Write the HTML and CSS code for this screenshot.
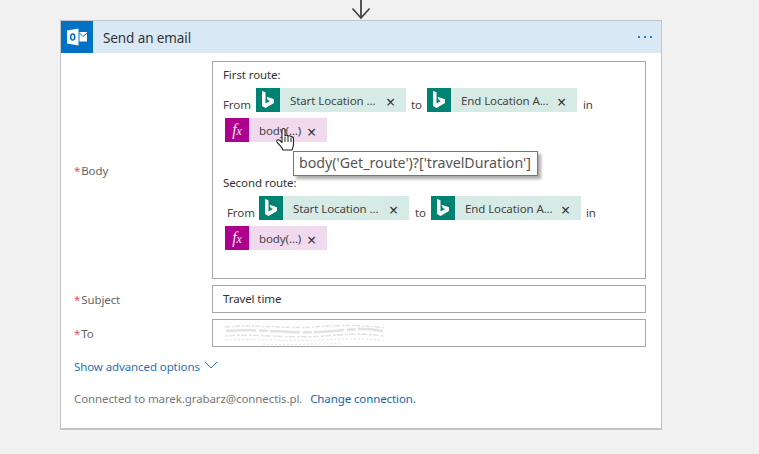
FILE: index.html
```html
<!DOCTYPE html>
<html lang="en">
<head>
<meta charset="utf-8">
<title>Send an email</title>
<link rel="stylesheet" href="styles.css">
</head>
<body>
<div class="arrow">
	<svg width="20" height="21" viewBox="0 0 20 21"><path d="M10 0V19M1.500 9.500L10 19L18.500 9.500" fill="none" stroke="#444" stroke-width="1.800"/></svg>
</div>
<div class="card">
	<div class="card-head">
		<div class="head-icon">
			<svg width="22" height="22" viewBox="0 0 22 22">
				<path d="M1 4.500L12.500 2.500V19.500L1 17.500Z" fill="#fff"/>
				<path d="M13.500 6H21V15.500H13.500Z" fill="#fff"/>
				<path d="M13.500 7L17 10.500L21 7" fill="none" stroke="#0072c6" stroke-width="1"/>
				<ellipse cx="6.700" cy="11" rx="2" ry="3" fill="none" stroke="#0072c6" stroke-width="1.500"/>
			</svg>
		</div>
		<div class="head-title">Send an email</div>
		<div class="head-dots"><i></i><i></i><i></i></div>
	</div>
	<div class="card-body">
		<div class="row">
			<div class="label label-body"><span class="req">*</span>Body</div>
			<div class="field editor">
				<div class="line">First route:</div>
				<div class="tokens">
					<span class="word word-from">From</span>
					<span class="chip chip-bing"><span class="chip-icon"><svg width="14" height="18" viewBox="0 0 14 18"><path d="M1 0L4.500 1.300V12.500L9 10L6.800 9L5.500 5.800L13 8.300V12L4.500 17L1 15Z" fill="#fff"/></svg></span><span class="chip-text">Start Location ...</span><span class="chip-x">×</span></span>
					<span class="word word-to">to</span>
					<span class="chip chip-bing"><span class="chip-icon"><svg width="14" height="18" viewBox="0 0 14 18"><path d="M1 0L4.500 1.300V12.500L9 10L6.800 9L5.500 5.800L13 8.300V12L4.500 17L1 15Z" fill="#fff"/></svg></span><span class="chip-text">End Location A...</span><span class="chip-x">×</span></span>
					<span class="word word-in">in</span>
				</div>
				<div class="fx-row">
					<span class="chip chip-fx"><span class="chip-icon"><span class="fx">f<small>x</small></span></span><span class="chip-text">body(...)</span><span class="chip-x">×</span></span>
				</div>
				<div class="line line-second">Second route:</div>
				<div class="tokens tokens-second">
					<span class="word word-from">From</span>
					<span class="chip chip-bing"><span class="chip-icon"><svg width="14" height="18" viewBox="0 0 14 18"><path d="M1 0L4.500 1.300V12.500L9 10L6.800 9L5.500 5.800L13 8.300V12L4.500 17L1 15Z" fill="#fff"/></svg></span><span class="chip-text">Start Location ...</span><span class="chip-x">×</span></span>
					<span class="word word-to">to</span>
					<span class="chip chip-bing"><span class="chip-icon"><svg width="14" height="18" viewBox="0 0 14 18"><path d="M1 0L4.500 1.300V12.500L9 10L6.800 9L5.500 5.800L13 8.300V12L4.500 17L1 15Z" fill="#fff"/></svg></span><span class="chip-text">End Location A...</span><span class="chip-x">×</span></span>
					<span class="word word-in">in</span>
				</div>
				<div class="fx-row">
					<span class="chip chip-fx"><span class="chip-icon"><span class="fx">f<small>x</small></span></span><span class="chip-text">body(...)</span><span class="chip-x">×</span></span>
				</div>
			</div>
		</div>
		<div class="row">
			<div class="label"><span class="req">*</span>Subject</div>
			<div class="field input">Travel time</div>
		</div>
		<div class="row">
			<div class="label"><span class="req">*</span>To</div>
			<div class="field input">
				<svg class="smudge" width="164" height="26" viewBox="0 0 164 26">
					<g fill="none" stroke="#e2e2e2">
						<path d="M2 6C30 3 60 8 90 6S140 4 162 7" stroke-width="1.500" stroke-dasharray="5 2 2 1"/>
						<path d="M3 10C40 7 70 14 110 10S150 9 160 10" stroke-width="2.500" stroke-dasharray="30 3 9 2"/>
						<path d="M2 15C30 12 60 18 100 15S140 13 162 15" stroke-width="1.500" stroke-dasharray="3 1 6 2"/>
						<path d="M3 19C30 17 60 21 100 19S140 18 160 19" stroke-width="1" stroke-dasharray="2 2"/>
						<path d="M40 23C70 25 90 22 120 23" stroke-width="1" stroke-dasharray="2 2"/>
					</g>
				</svg>
			</div>
		</div>
		<div class="advanced">Show advanced options
			<svg width="14" height="8" viewBox="0 0 14 8"><path d="M1 1L7 7L13 1" fill="none" stroke="#2b72b8" stroke-width="1"/></svg>
		</div>
		<div class="connected">Connected to marek.grabarz@connectis.pl. <a class="change">Change connection.</a></div>
	</div>
</div>
<div class="tooltip">body('Get_route')?['travelDuration']</div>
<svg class="hand" width="20" height="26" viewBox="0 0 20 26">
	<path d="M7 13V3C7 1 10 1 10 3V9C10 8 13 8 13 9.500C13 8.500 16 8.500 16 10C16 9.500 18.500 9.500 18.500 11.500V17C18.500 20 17.500 21 17 23H8C7 20 4 18 2 15C1 13 3 12 5 13.500L7 15.500Z" fill="#fff" stroke="#222" stroke-width="1.100" stroke-linejoin="round"/>
	<path d="M10 10V15M13 10V15M16 11V15" stroke="#222" stroke-width="1"/>
</svg>
</body>
</html>
```

FILE: styles.css
```css
* {
	box-sizing: border-box;
	margin: 0;
	padding: 0;
}
html, body {
	height: 100%;
}
body {
	background: #f1f1f1;
	font-family: "Noto Sans", "Liberation Sans", sans-serif;
	font-size: 11.500px;
	letter-spacing: -0.100px;
	color: #444;
	overflow: hidden;
	padding-left: 60px;
}
.arrow {
	height: 20px;
	width: 602px;
	display: flex;
	justify-content: center;
}
.arrow svg {
	margin-left: -1px;
	margin-top: -1px;
}
.card {
	width: 602px;
	height: 410px;
	background: #fff;
	border: 1px solid #c4c4c4;
	border-bottom-width: 2px;
}
.card-head {
	height: 32px;
	background: #d8e9f5;
	display: flex;
	align-items: center;
}
.head-icon {
	width: 32px;
	height: 32px;
	background: #0072c6;
	display: flex;
	align-items: center;
	justify-content: center;
}
.head-title {
	flex: 1;
	margin-left: 10px;
	padding-top: 1px;
	font-size: 13.500px;
	color: #333;
}
.head-dots {
	display: flex;
	gap: 4px;
	margin-right: 9px;
}
.head-dots i {
	width: 2px;
	height: 2px;
	background: #2b7cd3;
}
.card-body {
	padding: 8px 15px 0 13px;
}
.row {
	display: flex;
	margin-bottom: 6px;
}
.label {
	width: 138px;
	display: flex;
	align-items: center;
	color: #666;
}
.req {
	color: #e0505c;
	margin-right: 1px;
}
.field {
	width: 434px;
	border: 1px solid #a6a6a6;
	background: #fff;
}
.editor {
	height: 218px;
	padding: 3px 12px 0 10px;
}
.input {
	height: 28px;
	line-height: 26px;
	padding-left: 10px;
	color: #333;
	position: relative;
}
.smudge {
	position: absolute;
	left: 10px;
	top: 1px;
}
.line {
	height: 20px;
	line-height: 20px;
	color: #333;
}
.line-second {
	margin-top: 31px;
}
.tokens {
	display: flex;
	align-items: flex-end;
	margin-top: 3px;
	height: 24px;
}
.tokens-second {
	padding-left: 4px;
}
.word {
	color: #444;
	line-height: 14px;
}
.word-from {
	width: 33px;
}
.tokens-second .word-from {
	width: 32px;
}
.word-to {
	width: 16px;
	margin-left: 5px;
}
.tokens-second .word-to {
	margin-left: 6px;
}
.word-in {
	margin-left: 6px;
}
.tokens-second .word-in {
	margin-left: 5px;
}
.chip {
	display: inline-flex;
	height: 24px;
	align-items: center;
}
.chip-icon {
	width: 24px;
	height: 24px;
	display: flex;
	align-items: center;
	justify-content: center;
}
.chip-bing {
	width: 150px;
	background: #d7ebe6;
}
.chip-bing .chip-icon {
	background: #008272;
}
.chip-fx {
	width: 102px;
	background: #f1d9ee;
}
.chip-fx .chip-icon {
	background: #ad008c;
}
.chip-text {
	flex: 1;
	padding-left: 10px;
	color: #444;
	white-space: nowrap;
}
.chip-x {
	width: 20px;
	font-size: 16px;
	line-height: 24px;
	padding-top: 3px;
	color: #333;
}
.fx {
	font-family: "Liberation Serif", serif;
	font-style: italic;
	font-size: 16px;
	color: #fbe6f6;
}
.fx small {
	font-size: 12px;
}
.fx-row {
	margin-top: 6px;
	margin-left: 2px;
	height: 24px;
}
.advanced {
	margin-top: 12px;
	color: #2b6fb5;
	display: flex;
	align-items: center;
	gap: 4px;
}
.advanced svg {
	margin-top: -3px;
}
.connected {
	margin-top: 17px;
	color: #777;
}
.change {
	color: #1565b0;
	margin-left: 5px;
}
.tooltip {
	position: absolute;
	left: 293px;
	top: 151px;
	width: 245px;
	height: 25px;
	border: 1px solid #767676;
	background: #fff;
	box-shadow: 3px 3px 3px #aaa;
	font-size: 14.200px;
	letter-spacing: 0;
	line-height: 22px;
	padding-left: 5px;
	color: #555;
	white-space: nowrap;
}
.hand {
	position: absolute;
	left: 275px;
	top: 127px;
}
```
